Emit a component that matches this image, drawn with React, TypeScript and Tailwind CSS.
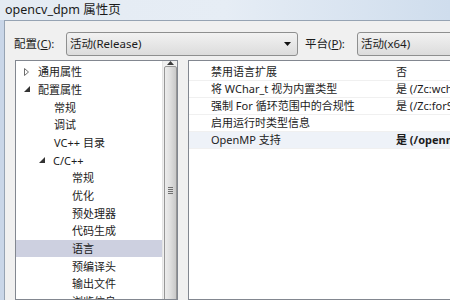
import React from "react";

const font = { fontFamily: '"Noto Sans", "Noto Sans CJK SC", sans-serif' };

type TreeItem = { label: string; x: number; arrow?: "closed" | "open"; selected?: boolean };

const treeItems: TreeItem[] = [
  { label: "通用属性", x: 22, arrow: "closed" },
  { label: "配置属性", x: 22, arrow: "open" },
  { label: "常规", x: 38 },
  { label: "调试", x: 38 },
  { label: "VC++ 目录", x: 38 },
  { label: "C/C++", x: 37, arrow: "open" },
  { label: "常规", x: 56 },
  { label: "优化", x: 56 },
  { label: "预处理器", x: 56 },
  { label: "代码生成", x: 56 },
  { label: "语言", x: 56, selected: true },
  { label: "预编译头", x: 56 },
  { label: "输出文件", x: 56 },
  { label: "浏览信息", x: 56 },
];

const props = [
  { name: "禁用语言扩展", value: "否" },
  { name: "将 WChar_t 视为内置类型", value: "是 (/Zc:wchar_t)" },
  { name: "强制 For 循环范围中的合规性", value: "是 (/Zc:forScope)" },
  { name: "启用运行时类型信息", value: "" },
  { name: "OpenMP 支持", value: "是 (/openmp)", bold: true },
];

function Arrow({ kind }: { kind: "closed" | "open" }) {
  if (kind === "closed") {
    return (
      <svg width="5" height="8" viewBox="0 0 5 8">
        <path d="M0.5 0.5 L4.5 4 L0.5 7.5 Z" fill="none" stroke="#6e6e6e" strokeWidth="1" />
      </svg>
    );
  }
  return (
    <svg width="6" height="6" viewBox="0 0 6 6">
      <path d="M6 0 L6 6 L0 6 Z" fill="#333" />
    </svg>
  );
}

function Combo({ text, className }: { text: string; className: string }) {
  return (
    <div
      className={`h-[24px] border border-[#8e8f8f] rounded-[3px] bg-gradient-to-b from-[#f2f2f2] to-[#dcdcdc] flex items-center pl-[3px] pr-[6px] text-[11.5px] text-[#1c1c1c] overflow-hidden whitespace-nowrap ${className}`}
    >
      <span className="flex-1">{text}</span>
      <svg width="7" height="4" viewBox="0 0 7 4">
        <path d="M0 0 L7 0 L3.5 4 Z" fill="#111" />
      </svg>
    </div>
  );
}

export default function App() {
  return (
    <div className="w-[450px] h-[300px] overflow-hidden bg-[#c9d6e8] text-[#1c1c1c]" style={font}>
      <div className="h-[20px] flex items-center pl-[5px] text-[12.5px] text-[#1a1a1a] bg-gradient-to-r from-[#e4ebf3] via-[#e6edf5] to-[#cfdded]">
        opencv_dpm 属性页
      </div>
      <div className="flex h-[280px]">
        <div className="w-[4px] shrink-0" />
        <div className="flex-1 bg-[#f0f0f0] border-l border-t border-[#96a3b3] flex flex-col">
          <div className="flex items-center mt-[11px] pl-[9px]">
            <div className="w-[52px] text-[11.5px]">
              配置(<span className="underline">C</span>):
            </div>
            <Combo text="活动(Release)" className="w-[232px]" />
            <div className="w-[52px] ml-[7px] text-[11.5px]">
              平台(<span className="underline">P</span>):
            </div>
            <Combo text="活动(x64)" className="w-[140px] shrink-0" />
          </div>
          <div className="flex mt-[4px] flex-1 min-h-0">
            <div className="ml-[10px] w-[163px] border border-[#828790] bg-white flex overflow-hidden">
              <div className="w-[146px] pt-[2px] text-[11px]">
                {treeItems.map((it, i) => (
                  <div
                    key={i}
                    className={`h-[17.67px] flex items-center relative ${it.selected ? "bg-[#cdd0e0]" : ""}`}
                  >
                    {it.arrow && (
                      <div
                        className="absolute top-0 h-full flex items-center"
                        style={{ left: it.x - 14 }}
                      >
                        <Arrow kind={it.arrow} />
                      </div>
                    )}
                    <span style={{ paddingLeft: it.x }} className="whitespace-nowrap leading-none">
                      {it.label}
                    </span>
                  </div>
                ))}
              </div>
              <div className="w-[15px] border-l border-[#e4e4e4] bg-[#f0f0f0] flex flex-col items-center">
                <div className="h-[16px] w-full flex items-center justify-center">
                  <svg width="7" height="4" viewBox="0 0 7 4">
                    <path d="M0 4 L7 4 L3.5 0 Z" fill="#3a3a3a" />
                  </svg>
                </div>
                <div className="w-[13px] h-[248px] mt-[1px] border border-[#969696] rounded-[2px] bg-gradient-to-r from-[#ececec] via-[#dedede] to-[#c9c9c9] flex flex-col items-center justify-center gap-[1px] shrink-0">
                  <div className="w-[5px] h-[1px] bg-[#6f6f6f]" />
                  <div className="w-[5px] h-[1px] bg-[#6f6f6f]" />
                  <div className="w-[5px] h-[1px] bg-[#6f6f6f]" />
                  <div className="w-[5px] h-[1px] bg-[#6f6f6f]" />
                </div>
              </div>
            </div>
            <div className="ml-[10px] flex-1 border border-[#828790] bg-white pt-[3px] text-[11px] overflow-hidden">
              {props.map((p, i) => (
                <div
                  key={i}
                  className={`h-[17px] flex items-center border-b border-[#f0f0f0] whitespace-nowrap ${i === 4 ? "bg-[#eef2f8]" : ""}`}
                >
                  <div className="w-[203px] shrink-0 pl-[22px]">{p.name}</div>
                  <div className={`pl-[4px] ${p.bold ? "font-bold" : ""}`}>{p.value}</div>
                </div>
              ))}
            </div>
          </div>
        </div>
      </div>
    </div>
  );
}
